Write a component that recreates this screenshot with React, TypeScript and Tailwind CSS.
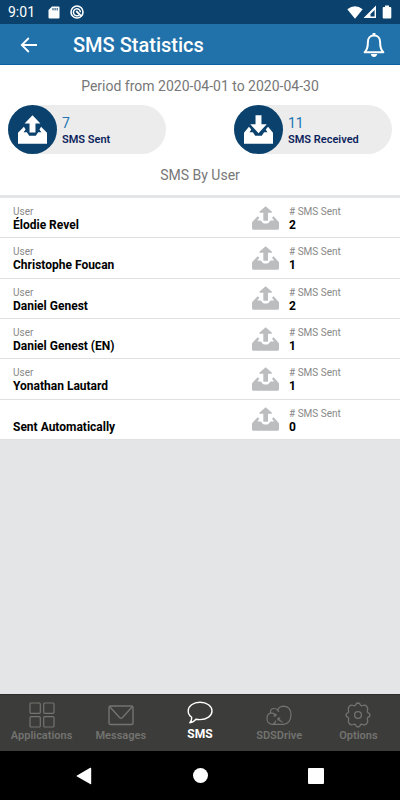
import type { ReactNode } from "react"

interface UserStat {
  label: string
  name: string
  sent: number
}

interface Tab {
  label: string
  icon: ReactNode
  active?: boolean
}

const userStats: UserStat[] = [
  { label: "User", name: "Élodie Revel", sent: 2 },
  { label: "User", name: "Christophe Foucan", sent: 1 },
  { label: "User", name: "Daniel Genest", sent: 2 },
  { label: "User", name: "Daniel Genest (EN)", sent: 1 },
  { label: "User", name: "Yonathan Lautard", sent: 1 },
  { label: "", name: "Sent Automatically", sent: 0 },
]

function OutboxIcon({ className }: { className?: string }) {
  return (
    <svg viewBox="0 0 81 71" className={className} fill="currentColor" aria-hidden="true">
      <path d="M41 0 L60 17 Q61 20 58 20 H48 V42 Q48 44 46 44 H36 Q34 44 34 42 V20 H24 Q21 20 22 17 Z" />
      <path d="M17 30 L22 35 L16 43 H25 Q28 43 29 46 L32 50 Q34 52 37 52 H45 Q48 52 50 50 L53 46 Q54 43 57 43 H66 L60 35 L65 30 L79 46 Q81 48 81 51 V66 Q81 71 76 71 H5 Q0 71 0 66 V51 Q0 48 2 46 Z" />
    </svg>
  )
}

function TrayIcon({ down = false }: { down?: boolean }) {
  return (
    <svg viewBox="0 0 88 86" className="h-[29px] w-[29px]" fill="currentColor" aria-hidden="true">
      {down ? (
        <>
          <path d="M35 0 H53 V27 H69 L44 54 L19 27 H35 Z" />
          <path d="M15 35 L22 43 L17 51 H27 L34 62 H54 L61 51 H71 L66 43 L73 35 L88 53 V86 H0 V53 Z" />
        </>
      ) : (
        <>
          <path d="M44 0 L68 25 H53 V52 H35 V25 H20 Z" />
          <path d="M18 35 L23 43 L17 51 H27 L34 62 H54 L61 51 H71 L65 43 L70 35 L88 53 V86 H0 V53 Z" />
        </>
      )}
    </svg>
  )
}

function StatPill({ value, label, icon }: { value: number; label: string; icon: ReactNode }) {
  return (
    <div className="flex h-[49px] w-[158px] items-center gap-[5px] rounded-full bg-[#ececec]">
      <div className="flex size-[49px] shrink-0 items-center justify-center rounded-full bg-[#0a426d] text-white">
        {icon}
      </div>
      <div className="pt-[3px] whitespace-nowrap">
        <p className="text-[14px] leading-[18px] text-[#1d76b3]">{value}</p>
        <p className="text-[11px] leading-4 font-semibold text-[#0c1f5c]">{label}</p>
      </div>
    </div>
  )
}

function UserRow({ stat }: { stat: UserStat }) {
  return (
    <li className="flex items-center border-b border-[#dfe0e1] bg-white pl-[13px]">
      <div className="flex-1 pt-[2px]">
        <p className="h-[13px] text-[10px] leading-[13px] text-[#888]">{stat.label}</p>
        <p className="text-[12px] leading-[14px] font-bold text-black">{stat.name}</p>
      </div>
      <OutboxIcon className="h-6 w-[27px] text-[#bcbdbf]" />
      <div className="w-[121px] pt-[2px] pl-[10px]">
        <p className="text-[10px] leading-[13px] text-[#888]"># SMS Sent</p>
        <p className="text-[12px] leading-[14px] font-bold text-black">{stat.sent}</p>
      </div>
    </li>
  )
}

const tabs: Tab[] = [
  {
    label: "Applications",
    icon: (
      <svg viewBox="0 0 26 26" className="size-[26px]" fill="none" stroke="currentColor" strokeWidth="1.2">
        <rect x="1" y="1" width="10.3" height="10.3" rx="1" />
        <rect x="14.7" y="1" width="10.3" height="10.3" rx="1" />
        <rect x="1" y="14.7" width="10.3" height="10.3" rx="1" />
        <rect x="14.7" y="14.7" width="10.3" height="10.3" rx="1" />
      </svg>
    ),
  },
  {
    label: "Messages",
    icon: (
      <svg viewBox="0 0 26 26" className="size-[26px]" fill="none" stroke="currentColor" strokeWidth="1.4">
        <rect x="1" y="4" width="24" height="18.5" rx="1.5" />
        <path d="M2 5 L11.5 15.5 Q13 17 14.5 15.5 L24 5" />
      </svg>
    ),
  },
  {
    label: "SMS",
    active: true,
    icon: (
      <svg viewBox="0 0 26 26" className="size-[26px]" fill="none" stroke="currentColor" strokeWidth="1.4" strokeLinejoin="round">
        <path d="M13 2.2 C19.8 2.2 25 6 25 11 C25 16 19.8 19.6 13 19.6 Q10.8 19.6 9 19.2 Q6.6 22.4 2.8 22.8 Q5 20.5 4.7 17.3 Q1.2 14.8 1.2 11 C1.2 6 6.3 2.2 13 2.2 Z" />
      </svg>
    ),
  },
  {
    label: "SDSDrive",
    icon: (
      <svg viewBox="0 0 26 26" className="size-[26px]" fill="none" stroke="currentColor" strokeWidth="1.2" strokeLinecap="round" strokeLinejoin="round">
        <path d="M9.6 19 Q8.8 22.3 6.2 22.3 Q1 21.8 1 16.5 Q1 12.2 4.6 11.2 Q3.8 8 6.5 6.8 Q9.4 5.8 11.6 8 Q13.6 4.2 17.7 4.2 Q25 4.8 25 13 Q24.6 21.5 17.6 22.3 H6.2" />
        <path d="M4.8 11.2 Q8.4 10.6 9.6 13.8 M7.8 13.9 H9.8 V12 M11.6 8 L12.6 9.4 M12 18 V16.2 H13.8 M12.2 16.6 Q13.6 19.6 16.4 20" />
      </svg>
    ),
  },
  {
    label: "Options",
    icon: (
      <svg viewBox="0 0 26 26" className="size-[26px]" fill="none" stroke="currentColor" strokeWidth="1.3" strokeLinejoin="round">
        <path d="M10.6 3 Q11.2 1 13 1 T15.4 3 Q16 4.2 17.8 3.5 Q20 2.5 21.6 4.2 T22.5 8.2 Q21.8 10 23 10.6 Q25 11.2 25 13 T23 15.4 Q21.8 16 22.5 17.8 Q23.4 20 21.6 21.8 T17.8 22.5 Q16 21.8 15.4 23 Q14.8 25 13 25 T10.6 23 Q10 21.8 8.2 22.5 Q6 23.4 4.4 21.8 T3.5 17.8 Q4.2 16 3 15.4 Q1 14.8 1 13 T3 10.6 Q4.2 10 3.5 8.2 Q2.6 6 4.4 4.2 T8.2 3.5 Q10 4.2 10.6 3 Z" />
        <circle cx="13" cy="13" r="3.4" />
      </svg>
    ),
  },
]

function StatusBar() {
  return (
    <div className="flex h-6 items-center bg-[#0a426d] px-2 text-white">
      <span className="w-10 text-[14px] leading-6">9:01</span>
      <svg viewBox="0 0 12 13" className="h-[13px] w-3" aria-hidden="true">
        <path fill="currentColor" d="M4 0.5 H10.5 Q11.5 0.5 11.5 1.5 V11.5 Q11.5 12.5 10.5 12.5 H1.5 Q0.5 12.5 0.5 11.5 V4 Z" />
        <path stroke="#0a426d" d="M5 2 V4.4 M7.1 2 V4.4 M9.2 2 V4.4" />
      </svg>
      <svg viewBox="0 0 14 14" className="ml-[10px] size-[14px]" fill="none" stroke="currentColor" aria-hidden="true">
        <circle cx="7" cy="7" r="6" strokeWidth="1.6" />
        <path strokeWidth="1.5" d="M9 10.1 A3.5 3.5 0 1 1 10.4 7.2" />
        <path strokeWidth="1.8" d="M6.2 6 L11 10.8" />
      </svg>
      <div className="ml-auto flex items-center">
        <svg viewBox="0 0 16 13" className="h-[13px] w-4" aria-hidden="true">
          <path fill="currentColor" d="M0.3 3.2 Q8 -2.6 15.7 3.2 L8 12.8 Z" />
        </svg>
        <svg viewBox="0 0 14 14" className="h-[14px] w-[14px]" aria-hidden="true">
          <path fill="currentColor" fillRule="evenodd" d="M13 0.5 V13 H0.5 Z M11.6 5 L7.5 9 V11.5 H11.6 Z" />
        </svg>
        <svg viewBox="0 0 10 14" className="ml-[5px] h-[14px] w-[10px]" fill="currentColor" aria-hidden="true">
          <path d="M3 0.5 H7 V2 H8.4 Q9.3 2 9.3 3 V12.5 Q9.3 13.5 8.4 13.5 H1.6 Q0.7 13.5 0.7 12.5 V3 Q0.7 2 1.6 2 H3 Z" />
        </svg>
      </div>
    </div>
  )
}

function AppBar() {
  return (
    <header className="flex h-[41px] items-center border-b border-[#0c62a0] bg-[#2171aa] px-[14px] pt-[2px] text-white">
      <button type="button" aria-label="Back" className="flex w-[59px] pl-[6px]">
        <svg viewBox="0 0 18 16" className="h-4 w-[18px]" fill="none" stroke="currentColor" strokeWidth="1.8">
          <path d="M17 8 H2 M8.8 1 L1.8 8 L8.8 15" />
        </svg>
      </button>
      <h1 className="flex-1 text-[20px] leading-6 font-medium">SMS Statistics</h1>
      <button type="button" aria-label="Notifications">
        <svg viewBox="0 0 24 26" className="h-[26px] w-6" aria-hidden="true">
          <path fill="none" stroke="currentColor" strokeWidth="2" strokeLinejoin="round" d="M12 3.6 C8 3.6 5.9 6.6 5.9 10 C5.9 16 4.8 17.6 2.6 20.3 H21.4 C19.2 17.6 18.1 16 18.1 10 C18.1 6.6 16 3.6 12 3.6 Z" />
          <path fill="currentColor" d="M10.6 1 H13.4 V4 H10.6 Z M8.8 22 H15.2 Q14.6 25 12 25 T8.8 22 Z" />
        </svg>
      </button>
    </header>
  )
}

function TabBar() {
  return (
    <nav className="grid h-[57px] grid-cols-5 border-t border-[#2d2d2c] bg-[#3c3c3b] px-[2px]">
      {tabs.map((tab) => (
        <a
          key={tab.label}
          href="#"
          aria-current={tab.active ? "page" : undefined}
          className={`flex flex-col items-center leading-4 ${
            tab.active ? "pt-[5px] text-[12px] font-bold text-white" : "pt-[7px] text-[11px] font-semibold text-[#73736f]"
          }`}
        >
          {tab.icon}
          <span>{tab.label}</span>
        </a>
      ))}
    </nav>
  )
}

function SystemNav() {
  return (
    <div className="flex h-[49px] items-center justify-between bg-black px-[76px] text-white">
      <button type="button" aria-label="System back">
        <svg viewBox="0 0 16 18" className="h-[18px] w-4" fill="currentColor">
          <path d="M14.2 0.8 Q15.2 0.4 15.2 1.5 V16.5 Q15.2 17.6 14.2 17 L1 9.6 Q0 9 1 8.4 Z" />
        </svg>
      </button>
      <button type="button" aria-label="Home" className="size-[15px] rounded-full bg-white" />
      <button type="button" aria-label="Recent apps" className="size-4 rounded-[1px] bg-white" />
    </div>
  )
}

export default function App() {
  return (
    <div className="flex min-h-screen flex-col bg-[#e4e5e7] font-[Roboto,sans-serif]">
      <StatusBar />
      <AppBar />
      <main className="flex-1">
        <section className="bg-white px-2 pt-3 pb-[11px] text-center">
          <p className="text-[14px] leading-[18px] text-[#777]">Period from 2020-04-01 to 2020-04-30</p>
          <div className="mt-[10px] flex justify-between text-left">
            <StatPill value={7} label="SMS Sent" icon={<TrayIcon />} />
            <StatPill value={11} label="SMS Received" icon={<TrayIcon down />} />
          </div>
          <h2 className="mt-3 text-[14px] leading-[18px] text-[#777]">SMS By User</h2>
        </section>
        <ul className="mt-[3px] grid min-h-[242px] auto-rows-fr">
          {userStats.map((stat) => (
            <UserRow key={stat.name} stat={stat} />
          ))}
        </ul>
      </main>
      <TabBar />
      <SystemNav />
    </div>
  )
}
